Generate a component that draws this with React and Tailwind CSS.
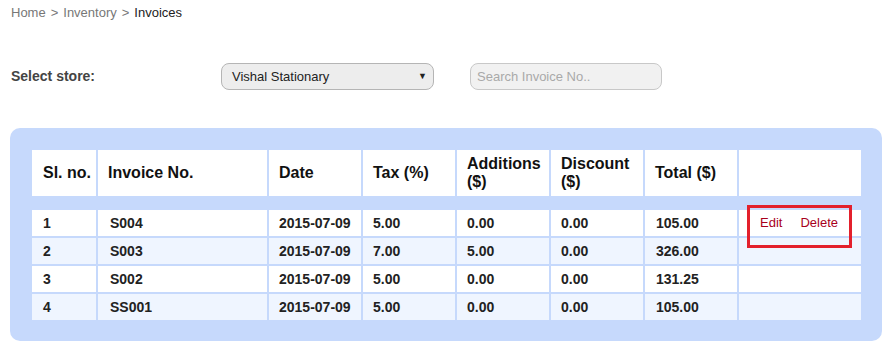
import React from "react";

const rows = [
  { sl: "1", inv: "S004", date: "2015-07-09", tax: "5.00", add: "0.00", disc: "0.00", total: "105.00", actions: true },
  { sl: "2", inv: "S003", date: "2015-07-09", tax: "7.00", add: "5.00", disc: "0.00", total: "326.00" },
  { sl: "3", inv: "S002", date: "2015-07-09", tax: "5.00", add: "0.00", disc: "0.00", total: "131.25" },
  { sl: "4", inv: "SS001", date: "2015-07-09", tax: "5.00", add: "0.00", disc: "0.00", total: "105.00" },
];

export default function App() {
  return (
    <div className="w-[893px] h-[354px] bg-white px-[10px] font-['Liberation_Sans',Arial,sans-serif] text-[#222]">
      <div className="pt-[5px] pl-[1px] text-[13px] leading-[16px] flex gap-[5px]">
        <span className="text-[#777]">Home</span>
        <span className="text-[#777]">&gt;</span>
        <span className="text-[#777]">Inventory</span>
        <span className="text-[#777]">&gt;</span>
        <span className="text-[#222]">Invoices</span>
      </div>

      <div className="mt-[42px] flex items-center h-[27px]">
        <div className="w-[211px] pl-[1px] text-[14px] font-bold text-[#444]">Select store:</div>
        <div className="w-[213px] h-[27px] rounded-[8px] border border-[#b5b5b5] bg-[#ededed] flex items-center justify-between pl-[10px] pr-[6px] text-[13px] text-[#222]">
          <span>Vishal Stationary</span>
          <span className="text-[9px] leading-none text-[#222]">▼</span>
        </div>
        <div className="ml-[36px] w-[192px] h-[27px] rounded-[8px] border border-[#c8c8c8] bg-[#f1f1f1] flex items-center pl-[6px] text-[13px] text-[#a9a9a9]">
          Search Invoice No..
        </div>
      </div>

      <div className="mt-[38px] w-[872px] rounded-[10px] bg-[#c6d9fc] pt-[20px] pb-[19px] px-[20px]">
        <table className="table-fixed border-separate border-spacing-[2px] w-[833px]">
          <colgroup>
            <col className="w-[64px]" />
            <col className="w-[169px]" />
            <col className="w-[92px]" />
            <col className="w-[92px]" />
            <col className="w-[92px]" />
            <col className="w-[92px]" />
            <col className="w-[92px]" />
            <col className="w-[122px]" />
          </colgroup>
          <thead>
            <tr className="h-[46px] bg-white text-[16px] leading-[18px] font-bold text-[#111] text-left">
              <th className="pl-[11px] font-bold">Sl. no.</th>
              <th className="pl-[10px] font-bold">Invoice No.</th>
              <th className="pl-[10px] font-bold">Date</th>
              <th className="pl-[10px] font-bold">Tax (%)</th>
              <th className="pl-[10px] font-bold">Additions<br />($)</th>
              <th className="pl-[10px] font-bold">Discount<br />($)</th>
              <th className="pl-[10px] font-bold">Total ($)</th>
              <th></th>
            </tr>
            <tr className="h-[10px]">
              <td colSpan={8} className="p-0"></td>
            </tr>
          </thead>
          <tbody>
            {rows.map((r, i) => (
              <tr key={r.sl} className={`h-[26px] text-[14px] leading-[16px] font-bold text-[#222] ${i % 2 === 0 ? "bg-white" : "bg-[#eff5ff]"}`}>
                <td className="pl-[11px]">{r.sl}</td>
                <td className="pl-[12px]">{r.inv}</td>
                <td className="pl-[10px]">{r.date}</td>
                <td className="pl-[10px]">{r.tax}</td>
                <td className="pl-[10px]">{r.add}</td>
                <td className="pl-[10px]">{r.disc}</td>
                <td className="pl-[11px]">{r.total}</td>
                <td className="relative pl-[21px] font-normal text-[13px]">
                  {r.actions && (
                    <>
                      <span className="text-[#a8001c]">Edit</span>
                      <span className="ml-[18px] text-[#a8001c]">Delete</span>
                      <div className="absolute left-[8px] top-[-5px] w-[105px] h-[43px] border-[3px] border-[#e3202c]"></div>
                    </>
                  )}
                </td>
              </tr>
            ))}
          </tbody>
        </table>
      </div>
    </div>
  );
}
